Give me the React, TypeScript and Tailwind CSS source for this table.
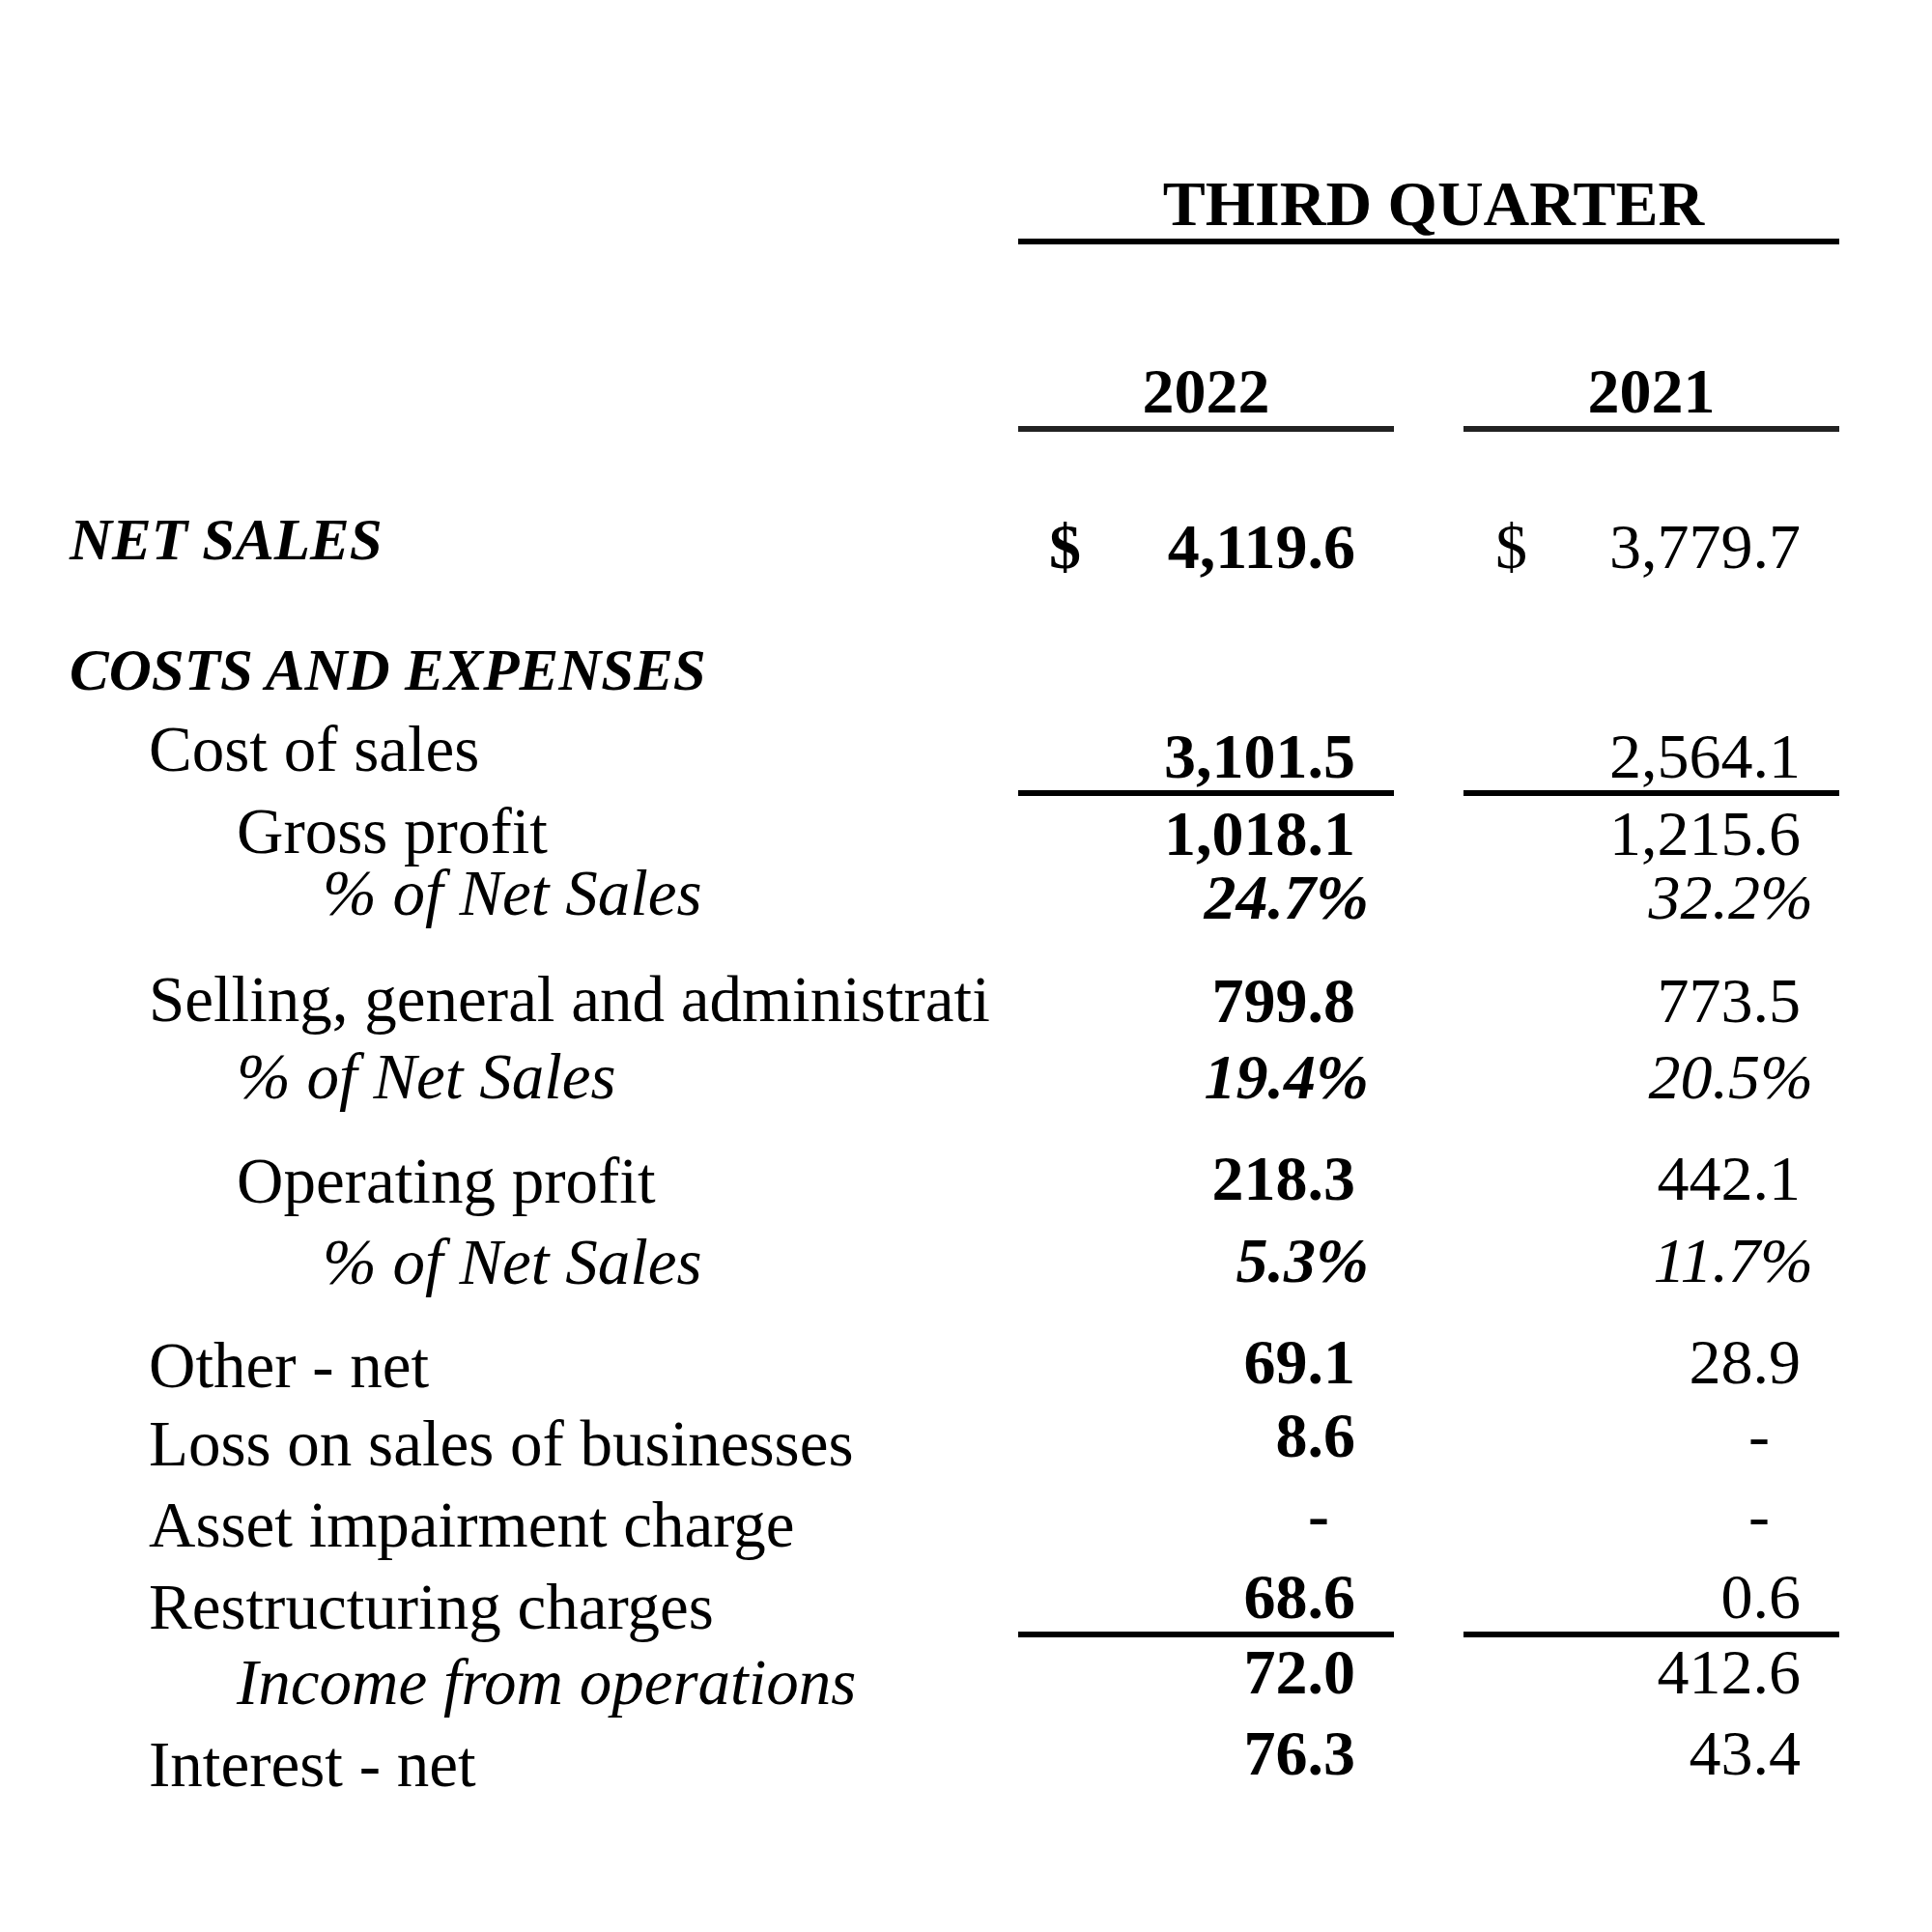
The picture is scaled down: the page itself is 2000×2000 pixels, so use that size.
import React from "react";

type CellProps = {
  text: string;
  cls: string;
  pt?: string;
  line?: string;
  dollar?: string;
};

const Val = ({ text, cls, pt = "", line, dollar }: CellProps) => (
  <div className={`flex flex-col ${pt}`}>
    <div className={`flex leading-[64px] text-[66px] ${dollar ? "justify-between" : "justify-end"} ${cls}`}>
      {dollar && <span className={dollar}>$</span>}
      <span>{text}</span>
    </div>
    {line && <div className={`h-[6px] bg-black ${line}`} />}
  </div>
);

type RowProps = {
  h: string;
  label: string;
  lc: string;
  v1: string;
  c1: string;
  p1?: string;
  v2: string;
  c2: string;
  p2?: string;
  line?: string;
  d1?: string;
  d2?: string;
};

const Row = ({ h, label, lc, v1, c1, p1, v2, c2, p2, line, d1, d2 }: RowProps) => (
  <div className={`grid grid-cols-[1054px_389px_72px_389px] ${h}`}>
    <div className={`whitespace-nowrap leading-[62px] ${lc}`}>{label}</div>
    <Val text={v1} cls={c1} pt={p1} line={line} dollar={d1} />
    <div />
    <Val text={v2} cls={c2} pt={p2} line={line} dollar={d2} />
  </div>
);

const B1 = "font-bold pr-[40px]";
const R2 = "pr-[40px]";
const P1 = "font-bold italic pr-[26px]";
const P2 = "italic pr-[27px]";

export default function App() {
  return (
    <div className="w-[2000px] h-[2000px] bg-white text-black [font-family:'Liberation_Serif',serif] pt-[178px]">
      {/* THIRD QUARTER header */}
      <div className="grid grid-cols-[1054px_850px]">
        <div />
        <div className="flex flex-col">
          <div className="text-center pl-[10px] font-bold text-[66px] leading-[66px] whitespace-nowrap">THIRD QUARTER</div>
          <div className="mt-[3px] h-[6px] bg-black" />
        </div>
      </div>
      {/* Years */}
      <div className="mt-[119px] grid grid-cols-[1054px_389px_72px_389px]">
        <div />
        <div className="flex flex-col">
          <div className="text-center font-bold text-[66px] leading-[66px]">2022</div>
          <div className="mt-[3px] h-[6px] bg-[#222]" />
        </div>
        <div />
        <div className="flex flex-col">
          <div className="text-center font-bold text-[66px] leading-[66px]">2021</div>
          <div className="mt-[3px] h-[6px] bg-[#222]" />
        </div>
      </div>

      <div className="mt-[78px] flex flex-col">
        <Row
          h="h-[136px]"
          label="NET SALES"
          lc="pl-[72px] pt-[3px] text-[61px] font-bold italic"
          v1="4,119.6"
          c1={B1}
          p1="pt-[9px]"
          d1="pl-[32px]"
          v2="3,779.7"
          c2={R2}
          p2="pt-[9px]"
          d2="pl-[33px]"
        />
        <div className="h-[81px] pt-[2px] pl-[72px] text-[61px] font-bold italic leading-[62px] whitespace-nowrap">COSTS AND EXPENSES</div>
        <Row h="h-[85px]" label="Cost of sales" lc="pl-[154px] pt-[2px] text-[67px]" v1="3,101.5" c1={B1} p1="pt-[9px]" v2="2,564.1" c2={R2} p2="pt-[9px]" line="mt-[3px]" />
        <Row h="h-[64px]" label="Gross profit" lc="pl-[245px] pt-[2px] text-[67px]" v1="1,018.1" c1={B1} p1="pt-[4px]" v2="1,215.6" c2={R2} p2="pt-[4px]" />
        <Row h="h-[110px]" label="% of Net Sales" lc="pl-[334px] pt-[2px] text-[67px] italic" v1="24.7%" c1={P1} p1="pt-[6px]" v2="32.2%" c2={P2} p2="pt-[6px]" />
        <Row h="h-[80px]" label="Selling, general and administrati" lc="pl-[154px] pt-[2px] text-[67px]" v1="799.8" c1={B1} p1="pt-[3px]" v2="773.5" c2={R2} p2="pt-[3px]" />
        <Row h="h-[106px]" label="% of Net Sales" lc="pl-[245px] pt-[2px] text-[67px] italic" v1="19.4%" c1={P1} p1="pt-[2px]" v2="20.5%" c2={P2} p2="pt-[2px]" />
        <Row h="h-[85px]" label="Operating profit" lc="pl-[245px] pt-[4px] text-[67px]" v1="218.3" c1={B1} p1="pt-[1px]" v2="442.1" c2={R2} p2="pt-[1px]" />
        <Row h="h-[105px]" label="% of Net Sales" lc="pl-[334px] pt-[3px] text-[67px] italic" v1="5.3%" c1={P1} p1="pt-[1px]" v2="11.7%" c2={P2} p2="pt-[1px]" />
        <Row h="h-[76px]" label="Other - net" lc="pl-[154px] pt-[5px] text-[67px]" v1="69.1" c1={B1} p1="pt-[1px]" v2="28.9" c2={R2} p2="pt-[1px]" />
        <Row h="h-[83px]" label="Loss on sales of businesses" lc="pl-[154px] pt-[10px] text-[67px]" v1="8.6" c1={B1} p1="pt-[1px]" v2="-" c2="pr-[72px]" p2="pt-[1px]" />
        <Row h="h-[84px]" label="Asset impairment charge" lc="pl-[154px] pt-[11px] text-[67px]" v1="-" c1="font-bold pr-[67px]" p1="pt-[1px]" v2="-" c2="pr-[72px]" p2="pt-[1px]" />
        <Row h="h-[78px]" label="Restructuring charges" lc="pl-[154px] pt-[12px] text-[67px]" v1="68.6" c1={B1} p1="pt-[1px]" v2="0.6" c2={R2} p2="pt-[1px]" line="mt-[4px]" />
        <Row h="h-[84px]" label="Income from operations" lc="pl-[245px] pt-[12px] text-[67px] italic" v1="72.0" c1={B1} p1="pt-[1px]" v2="412.6" c2={R2} p2="pt-[1px]" />
        <Row h="h-[100px]" label="Interest - net" lc="pl-[154px] pt-[13px] text-[67px]" v1="76.3" c1={B1} p1="pt-[1px]" v2="43.4" c2={R2} p2="pt-[1px]" />
      </div>
    </div>
  );
}
